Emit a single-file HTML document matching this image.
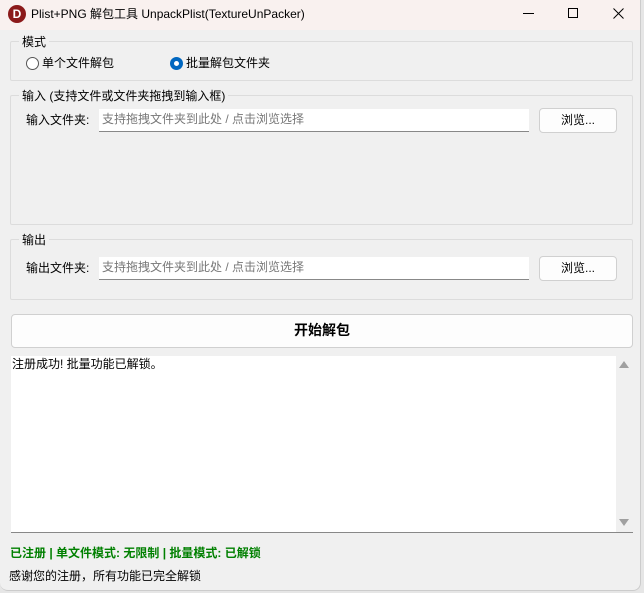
<!DOCTYPE html>
<html><head><meta charset="utf-8"><style>
*{box-sizing:border-box;margin:0;padding:0}
body{width:644px;height:593px;background:#e6e6e6;font-family:"Liberation Sans","Noto Sans CJK SC",sans-serif;font-size:12px;color:#000;position:relative;overflow:hidden}
.win{position:absolute;left:0;top:0;width:641px;height:591px;background:#f0f0f0;border-radius:0 0 8px 8px;overflow:hidden;border-right:1px solid #ccc;border-bottom:1px solid #ccc}
.title{position:absolute;left:0;top:0;width:641px;height:30px;background:#f9f1ef}
.a{position:absolute;white-space:nowrap;line-height:15px}
.grp{position:absolute;border:1px solid #dcdcdc;border-radius:2px}
.lbl{position:absolute;background:#f0f0f0;padding:0 3px;line-height:14px}
.inp{position:absolute;background:#fff;border-bottom:1px solid #888;color:#777;padding-left:3px;line-height:21px}
.btn{position:absolute;background:#fdfdfd;border:1px solid #d0d0d0;border-radius:4px;text-align:center;line-height:22px}
.radio{position:absolute;width:13px;height:13px;border-radius:50%;border:1px solid #555;background:#fff}
</style></head><body>
<div class="win">
<div class="title">
 <div class="a" style="left:8px;top:5px;width:18px;height:18px;border-radius:50%;background:#8b1a1a;color:#fff;font-weight:bold;font-size:12px;text-align:center;line-height:18px">D</div>
 <div class="a" style="left:31px;top:7px;font-size:12px">Plist+PNG 解包工具 UnpackPlist(TextureUnPacker)</div>
 <div class="a" style="left:523px;top:13px;width:11px;height:1px;background:#000"></div>
 <div class="a" style="left:568px;top:8px;width:10px;height:10px;border:1px solid #000"></div>
 <svg class="a" style="left:613px;top:8px" width="11" height="11"><path d="M0.5 0.5L10.5 10.5M10.5 0.5L0.5 10.5" stroke="#000" stroke-width="1"/></svg>
</div>
<div class="grp" style="left:10px;top:41px;width:623px;height:40px"></div>
<div class="lbl" style="left:19px;top:35px">模式</div>
<div class="radio" style="left:26px;top:57px"></div>
<div class="a" style="left:42px;top:56px">单个文件解包</div>
<div class="radio" style="left:170px;top:57px;border:4px solid #0067c0"></div>
<div class="a" style="left:186px;top:56px">批量解包文件夹</div>

<div class="grp" style="left:10px;top:95px;width:623px;height:130px"></div>
<div class="lbl" style="left:19px;top:89px">输入 (支持文件或文件夹拖拽到输入框)</div>
<div class="a" style="left:26px;top:113px">输入文件夹:</div>
<div class="inp" style="left:99px;top:109px;width:430px;height:23px">支持拖拽文件夹到此处 / 点击浏览选择</div>
<div class="btn" style="left:539px;top:108px;width:78px;height:25px">浏览...</div>

<div class="grp" style="left:10px;top:239px;width:623px;height:61px"></div>
<div class="lbl" style="left:19px;top:233px">输出</div>
<div class="a" style="left:26px;top:261px">输出文件夹:</div>
<div class="inp" style="left:99px;top:257px;width:430px;height:23px">支持拖拽文件夹到此处 / 点击浏览选择</div>
<div class="btn" style="left:539px;top:256px;width:78px;height:25px">浏览...</div>

<div class="btn" style="left:11px;top:314px;width:622px;height:34px;line-height:31px;font-weight:bold;font-size:14px">开始解包</div>

<div class="a" style="left:11px;top:356px;width:622px;height:177px;background:#fff;border-bottom:1px solid #888"></div>
<div class="a" style="left:616px;top:356px;width:17px;height:176px;background:#f0f0f0"></div>
<div class="a" style="left:619px;top:361px;width:0;height:0;border-left:5px solid transparent;border-right:5px solid transparent;border-bottom:7px solid #a0a0a0"></div>
<div class="a" style="left:619px;top:519px;width:0;height:0;border-left:5px solid transparent;border-right:5px solid transparent;border-top:7px solid #a0a0a0"></div>
<div class="a" style="left:12px;top:357px">注册成功! 批量功能已解锁。</div>

<div class="a" style="left:10px;top:546px;color:#008000;font-weight:bold">已注册 | 单文件模式: 无限制 | 批量模式: 已解锁</div>
<div class="a" style="left:9px;top:569px">感谢您的注册，所有功能已完全解锁</div>
</div>
</body></html>
